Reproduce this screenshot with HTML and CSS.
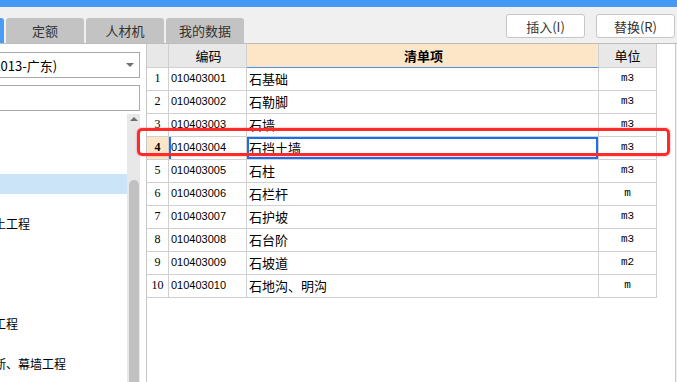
FILE: index.html
```html
<!DOCTYPE html>
<html lang="zh-CN">

<head>
    <meta charset="UTF-8">
    <meta name="viewport" content="width=device-width, initial-scale=1.0">
    <title>清单项</title>
    <link rel="stylesheet" href="styles.css">
</head>

<body>
    <div class="topbar"></div>

    <div class="toolbar">
        <div class="tabs">
            <div class="tab tab-active"></div>
            <div class="tab">定额</div>
            <div class="tab">人材机</div>
            <div class="tab">我的数据</div>
        </div>
        <div class="actions">
            <button class="btn">插入(I)</button>
            <button class="btn">替换(R)</button>
        </div>
    </div>

    <div class="main">
        <div class="side">
            <div class="select">
                <span class="select-text">(2013-广东)</span>
                <span class="caret"></span>
            </div>
            <div class="search"></div>
            <div class="tree-wrap">
                <ul class="tree">
                    <li></li>
                    <li></li>
                    <li></li>
                    <li class="tree-selected"></li>
                    <li></li>
                    <li>土工程</li>
                    <li></li>
                    <li></li>
                    <li></li>
                    <li></li>
                    <li>工程</li>
                    <li></li>
                    <li>断、幕墙工程</li>
                    <li></li>
                </ul>
                <div class="vscroll">
                    <span class="arrow-up"></span>
                    <span class="thumb"></span>
                </div>
            </div>
        </div>

        <div class="pane">
            <table class="grid">
                <thead>
                    <tr>
                        <th class="c-no"></th>
                        <th class="c-code">编码</th>
                        <th class="c-name">清单项</th>
                        <th class="c-unit">单位</th>
                    </tr>
                </thead>
                <tbody>
                    <tr><td class="c-no">1</td><td class="c-code">010403001</td><td class="c-name">石基础</td><td class="c-unit">m3</td></tr>
                    <tr><td class="c-no">2</td><td class="c-code">010403002</td><td class="c-name">石勒脚</td><td class="c-unit">m3</td></tr>
                    <tr><td class="c-no">3</td><td class="c-code">010403003</td><td class="c-name">石墙</td><td class="c-unit">m3</td></tr>
                    <tr class="row-current"><td class="c-no">4</td><td class="c-code">010403004</td><td class="c-name">石挡土墙</td><td class="c-unit">m3</td></tr>
                    <tr><td class="c-no">5</td><td class="c-code">010403005</td><td class="c-name">石柱</td><td class="c-unit">m3</td></tr>
                    <tr><td class="c-no">6</td><td class="c-code">010403006</td><td class="c-name">石栏杆</td><td class="c-unit">m</td></tr>
                    <tr><td class="c-no">7</td><td class="c-code">010403007</td><td class="c-name">石护坡</td><td class="c-unit">m3</td></tr>
                    <tr><td class="c-no">8</td><td class="c-code">010403008</td><td class="c-name">石台阶</td><td class="c-unit">m3</td></tr>
                    <tr><td class="c-no">9</td><td class="c-code">010403009</td><td class="c-name">石坡道</td><td class="c-unit">m2</td></tr>
                    <tr><td class="c-no">10</td><td class="c-code">010403010</td><td class="c-name">石地沟、明沟</td><td class="c-unit">m</td></tr>
                </tbody>
            </table>
        </div>

        <div class="mark"></div>
    </div>
</body>

</html>
```

FILE: styles.css
```css
* {
    margin: 0;
    padding: 0;
    box-sizing: border-box;
}

body {
    width: 677px;
    height: 382px;
    overflow: hidden;
    background-color: #f0f0f0;
    font-family: "Noto Sans CJK SC", "Liberation Sans", sans-serif;
    font-size: 13px;
    color: #000;
}

.topbar {
    height: 7px;
    background-color: #4399f4;
}

/* tabs + buttons */

.toolbar {
    height: 36px;
    display: flex;
    justify-content: space-between;
}

.tabs {
    align-self: flex-end;
    display: flex;
    gap: 2px;
}

.tab {
    width: 78px;
    height: 25px;
    line-height: 25px;
    text-align: center;
    background-color: #c3c3c3;
    color: #333;
    border-radius: 3px 3px 0 0;
}

.tab-active {
    width: 4px;
    background-color: #4a9cf5;
    border-radius: 0 3px 0 0;
}

.actions {
    display: flex;
    gap: 11px;
    margin-top: 7px;
    margin-right: 2px;
}

.btn {
    width: 79px;
    height: 24px;
    background-color: #fff;
    border: 1px solid #c6c6c6;
    border-radius: 3px;
    font-family: "Noto Sans CJK SC", "Liberation Sans", sans-serif;
    font-size: 13px;
    color: #333;
}

/* main area */

.main {
    position: relative;
    display: flex;
    height: 339px;
    border-top: 1px solid #bdbdbd;
}

.side {
    width: 146px;
    background-color: #fff;
    padding-top: 8px;
    padding-right: 6px;
    display: flex;
    flex-direction: column;
    overflow: hidden;
}

.select {
    flex-shrink: 0;
    height: 26px;
    margin-left: -2px;
    border: 1px solid #a9a9a9;
    display: flex;
    align-items: center;
    justify-content: space-between;
    overflow: hidden;
}

.select-text {
    white-space: nowrap;
    margin-left: -10px;
}

.caret {
    width: 0;
    height: 0;
    margin-right: 5px;
    border-left: 4px solid transparent;
    border-right: 4px solid transparent;
    border-top: 4px solid #707070;
}

.search {
    flex-shrink: 0;
    height: 26px;
    margin-top: 7px;
    margin-left: -2px;
    border: 1px solid #a9a9a9;
}

.tree-wrap {
    flex: 1;
    min-height: 0;
    display: flex;
    margin-top: 3px;
}

.tree {
    flex: 1;
    list-style: none;
    overflow: hidden;
    font-size: 12px;
}

.tree li {
    height: 20px;
    line-height: 20px;
    white-space: nowrap;
    text-indent: -6px;
}

.tree .tree-selected {
    background-color: #cce4f7;
}

.vscroll {
    width: 13px;
    background-color: #e8e8e8;
    display: flex;
    flex-direction: column;
    align-items: center;
}

.arrow-up {
    width: 0;
    height: 0;
    margin-top: 3px;
    border-left: 4px solid transparent;
    border-right: 4px solid transparent;
    border-bottom: 4px solid #6e6e6e;
}

.thumb {
    flex: 1;
    width: 10px;
    margin-top: 59px;
    background-color: #c1c1c1;
    border-radius: 5px 5px 0 0;
}

.pane {
    width: 530px;
    background-color: #fff;
    border-left: 1px solid #c8c8c8;
    border-right: 1px solid #c8c8c8;
}

/* grid */

.grid {
    width: 510px;
    table-layout: fixed;
    border-collapse: separate;
    border-spacing: 0;
}

.grid th,
.grid td {
    border-right: 1px solid #d0d0d0;
    border-bottom: 1px solid #d0d0d0;
    white-space: nowrap;
    overflow: hidden;
}

.grid th {
    height: 24px;
    font-weight: normal;
    background-color: #e8e8e8;
    text-align: center;
}

.grid td {
    height: 23px;
    line-height: 1;
    padding-bottom: 2px;
}

.grid th.c-name {
    background-color: #fde6c8;
    font-weight: bold;
    border-bottom-color: #4a90e2;
}

.c-no {
    width: 22px;
    text-align: center;
    font-family: "Liberation Serif", serif;
    font-size: 12px;
}

.c-code {
    width: 78px;
    padding-left: 2px;
    font-family: "Liberation Sans", sans-serif;
    font-size: 11px;
}

.c-name {
    width: 352px;
    padding-left: 2px;
}

.c-unit {
    width: 58px;
    text-align: center;
}

.grid td.c-unit {
    font-family: "Liberation Mono", monospace;
    font-size: 11px;
}

.grid th.c-code,
.grid th.c-unit {
    font-family: "Noto Sans CJK SC", sans-serif;
    font-size: 13px;
}

.row-current .c-no {
    background-color: #fde6c8;
    font-weight: bold;
}

.row-current .c-code {
    box-shadow: inset 2px 0 0 #1a6ef0;
}

.row-current .c-name {
    box-shadow: inset 0 0 0 2px #1a6ef0;
}

/* red annotation box */

.mark {
    position: absolute;
    left: 137px;
    top: 84px;
    width: 533px;
    height: 28px;
    border: 3px solid #ff2a2a;
    border-radius: 5px;
    box-shadow: 0 0 2px rgba(255, 0, 0, 0.5);
}
```
